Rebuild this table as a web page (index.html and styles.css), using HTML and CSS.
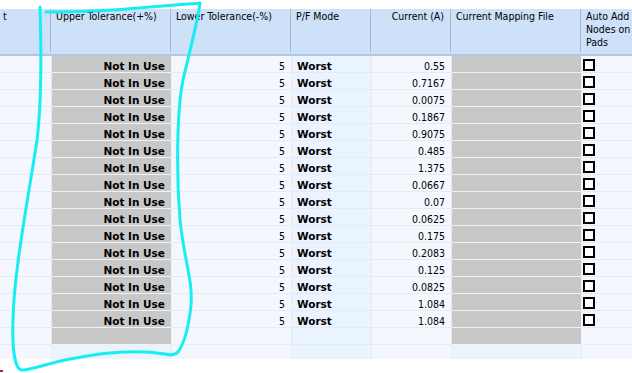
FILE: index.html
```html
<!DOCTYPE html>
<html lang="en">
<head>
<meta charset="utf-8"/>
<title>Current Settings Grid</title>
<link rel="stylesheet" href="styles.css">
</head>
<body>
<div class="grid-view">
  <div class="grid-head">
    <div class="hcell">t</div>
    <div class="hcell">Upper Tolerance(+%)</div>
    <div class="hcell">Lower Tolerance(-%)</div>
    <div class="hcell">P/F Mode</div>
    <div class="hcell right">Current (A)</div>
    <div class="hcell">Current Mapping File</div>
    <div class="hcell">Auto Add<br>Nodes on<br>Pads</div>
  </div>
  <div class="grid-body" id="grid-rows"></div>
</div>

<svg class="markup" width="632" height="373" viewBox="0 0 632 373">
  <path d="M46 12 C80 12 120 10 150 7 S190 4 200 3 C198 20 190 50 183 80 C177 110 176 170 180 220 C184 260 193 280 191 305 C189 325 185 340 180 349 C177 355 172 356 165 354 C140 350 105 352 70 359 C45 364 28 371 21 370 C15 368 12 350 13 320 C14 270 28 200 37 140 C42 100 41 40 40 7"
        fill="none" stroke="#18eef2" stroke-width="3" stroke-linecap="round" stroke-linejoin="round"/>
  <rect x="0" y="370" width="3" height="2" fill="#e0142a"/>
</svg>

<script>
const currents = ["0.55", "0.7167", "0.0075", "0.1867", "0.9075", "0.485", "1.375", "0.0667",
  "0.07", "0.0625", "0.175", "0.2083", "0.125", "0.0825", "1.084", "1.084"];

const body = document.getElementById("grid-rows");

function addRow(cells) {
  const row = document.createElement("div");
  row.className = "row";
  row.innerHTML = cells;
  body.appendChild(row);
}

currents.forEach(cur => {
  addRow(`
    <div class="cell"></div>
    <div class="cell off">Not In Use</div>
    <div class="cell num">5</div>
    <div class="cell mode">Worst</div>
    <div class="cell num">${cur}</div>
    <div class="cell off"></div>
    <div class="cell"><span class="check"></span></div>
  `);
});

// empty row, then the blank "new row" at the bottom
addRow(`
  <div class="cell"></div><div class="cell off"></div><div class="cell"></div>
  <div class="cell mode"></div><div class="cell"></div><div class="cell off"></div><div class="cell"></div>
`);
addRow(`
  <div class="cell"></div><div class="cell new"></div><div class="cell"></div>
  <div class="cell mode"></div><div class="cell"></div><div class="cell new"></div><div class="cell"></div>
`);
</script>
</body>
</html>
```

FILE: styles.css
```css
body {
  margin: 0;
  background: #fff;
  font-family: "DejaVu Sans Condensed", "DejaVu Sans", sans-serif;
  font-size: 10.5px;
  color: #000;
  overflow: hidden;
}

.grid-view {
  margin-top: 9px;
  width: 632px;
  height: 350px;
  overflow: hidden;
}

.grid-head {
  display: grid;
  grid-template-columns: 51px 120px 120px 80px 80px 130px 70px;
  width: 651px;
  height: 43px;
  padding-bottom: 2px;
  background: #cde1f9;
  border-bottom: 2px solid #b3c6de;
}
.hcell {
  padding: 1px 5px 0;
  line-height: 13px;
  border-right: 1px solid #a6b5c9;
  white-space: nowrap;
  overflow: hidden;
}
.hcell:first-child {
  padding-left: 3px;
}
.hcell.right {
  text-align: right;
  padding-right: 6px;
}

.grid-body {
  background: #f4f8fe;
}
.row {
  display: grid;
  grid-template-columns: 52px 120px 120px 80px 80px 130px 70px;
  width: 652px;
}
.cell {
  height: 16px;
  line-height: 20px;
  padding: 0 5px;
  border-right: 1px solid #e6ebf1;
  border-bottom: 1px solid #e6ebf1;
  white-space: nowrap;
  overflow: hidden;
}
.num {
  text-align: right;
  padding-right: 6px;
}
.off {
  background: #c8c8c8;
  border-color: #f2f2f2;
  text-align: right;
  padding-right: 6px;
  font-family: "DejaVu Sans", sans-serif;
  font-weight: bold;
}
.mode {
  background: #eaf4fe;
  font-family: "DejaVu Sans", sans-serif;
  font-weight: bold;
}
.new {
  background: #eaf4fe;
}
.check {
  display: block;
  width: 8px;
  height: 8px;
  margin: 3px 0 0 -4px;
  border: 2px solid #000;
  background: #fff;
}

.markup {
  position: absolute;
  left: 0;
  top: 0;
  pointer-events: none;
}
```
